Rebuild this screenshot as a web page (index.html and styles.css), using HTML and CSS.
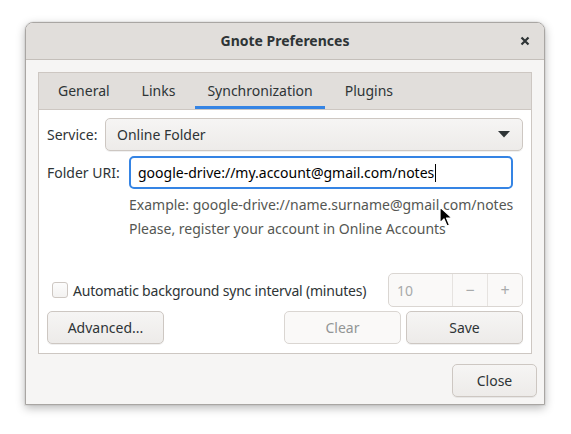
FILE: index.html
```html
<!DOCTYPE html>
<html>
<head>
<meta charset="utf-8">
<link rel="stylesheet" href="styles.css">
</head>
<body>
<div class="window">
  <div class="titlebar">
    <span class="title">Gnote Preferences</span>
    <svg class="close-x" width="10" height="10" viewBox="0 0 10 10"><path d="M1.5 1.5 L8.5 8.5 M8.5 1.5 L1.5 8.5" stroke="#2e3436" stroke-width="2.2" stroke-linecap="butt"/></svg>
  </div>
  <div class="content">
    <div class="notebook">
      <div class="tabs">
        <div class="tab">General</div>
        <div class="tab">Links</div>
        <div class="tab active">Synchronization</div>
        <div class="tab">Plugins</div>
      </div>
      <div class="page">
        <div class="row service-row">
          <span class="label">Service:</span>
          <div class="combo">
            <span>Online Folder</span>
            <svg width="12" height="7" viewBox="0 0 12 7"><path d="M0 0 H12 L6 6.5 Z" fill="#2e3436"/></svg>
          </div>
        </div>
        <div class="row uri-row">
          <span class="label">Folder URI:</span>
          <div class="entry"><span>google-drive://my.account@gmail.com/notes</span><span class="caret"></span></div>
        </div>
        <div class="hint">
          <div>Example: google-drive://name.surname@gmail.com/notes</div>
          <div>Please, register your account in Online Accounts</div>
        </div>
        <div class="spacer"></div>
        <div class="row interval-row">
          <label class="check"><span class="box"></span><span class="check-text">Automatic background sync interval (minutes)</span></label>
          <div class="spin">
            <span class="spin-val">10</span>
            <span class="spin-btn">−</span>
            <span class="spin-btn">+</span>
          </div>
        </div>
        <div class="row buttons-row">
          <button class="btn adv">Advanced...</button>
          <div class="grow"></div>
          <button class="btn disabled">Clear</button>
          <button class="btn">Save</button>
        </div>
      </div>
    </div>
    <div class="actions">
      <button class="btn close-btn">Close</button>
    </div>
  </div>
</div>
<svg class="cursor" width="14" height="22" viewBox="0 0 14 22"><path d="M1 1 L1 17 L5 13 L8 20 L10.5 19 L7.5 12 L13 12 Z" fill="#000" stroke="#fff" stroke-width="1.2" stroke-linejoin="round"/></svg>
</body>
</html>
```
FILE: styles.css
```css
* { box-sizing: border-box; }
html, body { margin: 0; padding: 0; background: #ffffff; }
body {
  width: 571px; height: 434px; overflow: hidden;
  padding: 22px 0 0 25px;
  font-family: "Noto Sans", sans-serif;
  font-size: 14px;
  color: #2e3436;
  position: relative;
}
.window {
  width: 520px; height: 383px;
  border: 1px solid #a9a6a3;
  border-radius: 8px 8px 0 0;
  background: #f6f5f4;
  box-shadow: 0 3px 10px rgba(0,0,0,0.28), 0 0 0 1px rgba(0,0,0,0.04);
  display: flex; flex-direction: column;
}
.titlebar {
  height: 37px;
  border-bottom: 1px solid #c4bfba;
  background: #e1dedb;
  border-radius: 7px 7px 0 0;
  display: flex; align-items: center; justify-content: center;
  padding-bottom: 2px;
  position: relative;
}
.title { font-weight: bold; font-size: 14px; color: #2e3436; }
.close-x { position: absolute; right: 14px; top: 13px; }
.content {
  flex: 1;
  padding: 12px 12px 0 12px;
  display: flex; flex-direction: column;
}
.notebook {
  border: 1px solid #cdc7c2;
  height: 282px;
  display: flex; flex-direction: column;
  background: #ffffff;
}
.tabs {
  height: 37px;
  background: #e1dedb;
  border-bottom: 1px solid #cdc7c2;
  display: flex;
  padding-left: 3px;
}
.tab {
  padding: 0 12px 2px;
  margin: 0 4px;
  display: flex; align-items: center;
  height: 36px;
  color: #2e3436;
}
.tab.active { box-shadow: inset 0 -3px 0 #3584e4; }
.page {
  flex: 1;
  padding: 8px 8px 9px 8px;
  display: flex; flex-direction: column;
}
.row { display: flex; align-items: center; }
.label { color: #2e3436; }
.service-row .label { width: 58px; }
.combo {
  flex: 1; height: 33px;
  border: 1px solid #cdc7c2; border-radius: 5px;
  background: linear-gradient(#f6f5f4, #edebe9);
  box-shadow: 0 1px rgba(0,0,0,0.06);
  display: flex; align-items: center; justify-content: space-between;
  padding: 0 12px 0 11px;
}
.uri-row { margin-top: 5px; }
.uri-row .label { width: 82px; }
.entry {
  width: 384px; height: 33px;
  border: 2px solid #3584e4; border-radius: 5px;
  background: #fff;
  display: flex; align-items: center;
  padding: 0 7px;
  color: #000;
}
.caret { display: inline-block; width: 1px; height: 18px; background: #000; margin-left: 1px; }
.hint {
  margin: 4px 0 0 82px;
  color: #555753;
  line-height: 24px;
}
.spacer { flex: 1; }
.interval-row { justify-content: space-between; height: 34px; }
.check { display: flex; align-items: center; padding-left: 5px; }
.check-text { letter-spacing: -0.2px; }
.box {
  width: 16px; height: 16px;
  border: 1px solid #cdc7c2; border-radius: 3px;
  background: linear-gradient(#fcfcfc, #f3f2f1);
  margin-right: 5px;
}
.spin {
  width: 135px; height: 34px;
  border: 1px solid #dad6d2; border-radius: 5px;
  background: #faf9f8;
  display: flex;
  color: #a8aaab;
}
.spin-val { flex: 1; display: flex; align-items: center; padding-left: 8px; }
.spin-btn {
  width: 35px; display: flex; align-items: center; justify-content: center;
  border-left: 1px solid #e6e3e0;
  font-size: 16px;
}
.buttons-row { margin-top: 4px; gap: 5px; }
.grow { flex: 1; }
.btn {
  font-family: inherit; font-size: 14px;
  color: #2e3436;
  height: 33px;
  border: 1px solid #cdc7c2; border-radius: 5px;
  background: linear-gradient(#f6f5f4, #edebe9);
  box-shadow: 0 1px rgba(0,0,0,0.06);
  width: 117px;
  padding: 0;
}
.btn.disabled { background: #faf9f8; color: #929595; border-color: #dad6d2; box-shadow: none; }
.actions { display: flex; justify-content: flex-end; padding-top: 10px; margin-right: -5px; }
.close-btn { width: 85px; }
.cursor { position: absolute; left: 439px; top: 206px; }
```
